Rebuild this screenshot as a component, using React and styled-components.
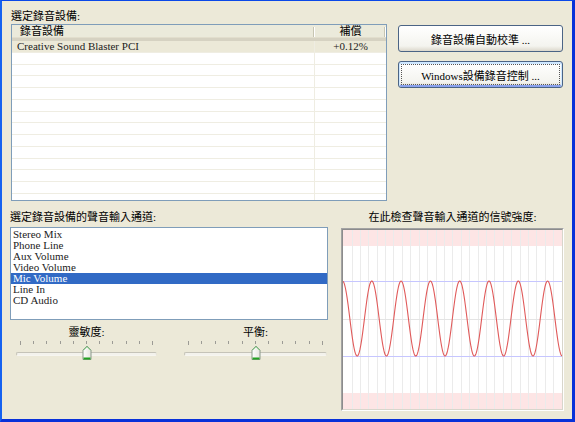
import React from 'react'
import styled, { createGlobalStyle } from 'styled-components'

const GlobalStyle = createGlobalStyle`
  html, body { margin: 0; padding: 0; }
  body { background: #ece9d8; }
`

const Window = styled.div`
  width: 575px;
  height: 422px;
  box-sizing: border-box;
  background: #ece9d8;
  border-top: 1px solid #0a48e8;
  border-left: 2px solid #1662f0;
  border-right: 3px solid #0831d9;
  border-bottom: 3px solid #0831d9;
  font-family: "Liberation Serif", "Noto Sans CJK TC", serif;
  font-size: 11px;
  color: #000;
  overflow: hidden;
`

const Top = styled.div`
  display: flex;
  padding: 8px 0 0 9px;
`

const DeviceCol = styled.div`
  width: 376px;
  display: flex;
  flex-direction: column;
`

const Label = styled.div`
  height: 14px;
  line-height: 14px;
  white-space: nowrap;
  text-align: ${p => (p.$center ? 'center' : 'left')};
`

const Table = styled.div`
  margin-top: 1px;
  height: 177px;
  box-sizing: border-box;
  border: 1px solid #7f9db9;
  background: #fff;
  overflow: hidden;
`

const HeaderRow = styled.div`
  display: grid;
  grid-template-columns: 303px 1fr;
  height: 16px;
  box-sizing: border-box;
  background: #ebeadb;
  border-bottom: 3px solid #d6d2c2;
  box-shadow: inset 0 -1px 0 #e2decd;
`

const HeaderCell = styled.div`
  position: relative;
  line-height: 13px;
  padding-left: ${p => (p.$center ? '0' : '8px')};
  text-align: ${p => (p.$center ? 'center' : 'left')};
  &::after {
    content: '';
    position: absolute;
    right: 1px;
    top: 2px;
    bottom: 1px;
    width: 1px;
    background: #c7c5b2;
    box-shadow: 1px 0 0 #fff;
  }
`

const Row = styled.div`
  display: grid;
  grid-template-columns: 303px 1fr;
  height: 11.75px;
  box-sizing: border-box;
  border-bottom: 1px solid #efede2;
  background: ${p => (p.$selected ? '#ece9d8' : '#fff')};
`

const Cell = styled.div`
  line-height: 11px;
  white-space: nowrap;
  padding-left: ${p => (p.$center ? '0' : '5px')};
  text-align: ${p => (p.$center ? 'center' : 'left')};
  border-right: ${p => (p.$divider ? '1px solid #efede2' : 'none')};
  color: #222;
`

const ButtonCol = styled.div`
  margin-left: 11px;
  width: 165px;
  padding-top: 16px;
  display: flex;
  flex-direction: column;
  gap: 9px;
`

const Button = styled.button`
  position: relative;
  height: 27px;
  padding: 0;
  border: 1px solid #4b6485;
  border-radius: 3px;
  background: linear-gradient(#ffffff, #f4f4ef 80%, #dcd8cc);
  font: inherit;
  color: #000;
  box-shadow: ${p =>
    p.$default ? 'inset 0 1px 0 1px #cee7ff, inset 0 -1px 0 1px #8aa2ee' : 'none'};
  &::after {
    content: '';
    display: ${p => (p.$default ? 'block' : 'none')};
    position: absolute;
    inset: 2px;
    border: 1px dotted #555;
  }
`

const Bottom = styled.div`
  display: flex;
  padding-left: 8px;
  margin-top: 9px;
`

const InputCol = styled.div`
  width: 318px;
  display: flex;
  flex-direction: column;
`

const ListBox = styled.div`
  margin-top: 3px;
  height: 93px;
  box-sizing: border-box;
  border: 1px solid #7f9db9;
  background: #fff;
  padding-top: 1px;
`

const ListItem = styled.div`
  height: 11px;
  line-height: 11px;
  padding-left: 2px;
  background: ${p => (p.$selected ? '#316ac5' : 'transparent')};
  color: ${p => (p.$selected ? '#fff' : '#222')};
`

const SliderRow = styled.div`
  display: grid;
  grid-template-columns: 141px 143px;
  column-gap: 27px;
  padding-left: 6px;
  margin-top: 6px;
`

const Slider = styled.div`
  display: flex;
  flex-direction: column;
`

const SliderLabel = styled.div`
  height: 12px;
  line-height: 12px;
  text-align: center;
  padding-left: ${p => p.$shift || 0}px;
`

const Ticks = styled.div`
  margin-top: 3px;
  height: 4px;
  display: flex;
  justify-content: space-between;
  padding: 0 4px;
`

const Tick = styled.span`
  width: 1px;
  height: ${p => (p.$end ? 4 : 3)}px;
  background: #9c9b95;
`

const Track = styled.div`
  position: relative;
  margin-top: 7px;
  height: 4px;
  box-sizing: border-box;
  border: 1px solid #c5c3b8;
  border-bottom-color: #f6f5f0;
  border-right-color: #e6e4da;
  border-radius: 2px;
  background: #f3f2ec;
`

const Thumb = styled.svg`
  position: absolute;
  left: 50%;
  top: -8px;
  transform: translateX(-50%);
`

const MeterCol = styled.div`
  margin-left: 13px;
  width: 223px;
  display: flex;
  flex-direction: column;
`

const Frame = styled.div`
  margin-top: 4px;
  height: 183px;
  box-sizing: border-box;
  border: 1px solid;
  border-color: #a3a3a3 #ffffff #ffffff #a3a3a3;
`

const FrameInner = styled.div`
  height: 100%;
  box-sizing: border-box;
  border: 1px solid;
  border-color: #8c8c8c #d8d6cc #d8d6cc #8c8c8c;
  background: #fff;
  svg { display: block; }
`

const channels = ['Stereo Mix', 'Phone Line', 'Aux Volume', 'Video Volume', 'Mic Volume', 'Line In', 'CD Audio']

const W = 219
const H = 179

function wavePath() {
  const pts = []
  for (let x = 0; x <= W; x += 0.5) {
    const y = 88.5 - 37.5 * Math.cos((2 * Math.PI * (x + 0.5)) / 29.3)
    pts.push(`${x.toFixed(1)},${y.toFixed(2)}`)
  }
  return 'M' + pts.join(' L')
}

const Meter = () => {
  const grid = []
  for (let x = 8.5; x < W; x += 8.4) grid.push(Math.round(x) + 0.5)
  return (
    <svg width={W} height={H} viewBox={`0 0 ${W} ${H}`}>
      <rect x="0" y="0" width={W} height="16" fill="#fde5e5" />
      <rect x="0" y="163" width={W} height="16" fill="#fde5e5" />
      {grid.map(x => (
        <line key={x} x1={x} y1="0" x2={x} y2={H} stroke="#ebebeb" strokeWidth="1" />
      ))}
      <line x1="0" y1="89.5" x2={W} y2="89.5" stroke="#e4e4e4" />
      <line x1="0" y1="51.5" x2={W} y2="51.5" stroke="#c6c6ff" />
      <line x1="0" y1="126.5" x2={W} y2="126.5" stroke="#c6c6ff" />
      <path d={wavePath()} fill="none" stroke="#e05a5a" strokeWidth="1.1" />
    </svg>
  )
}

const ThumbIcon = () => (
  <Thumb width="11" height="16" viewBox="0 0 11 16">
    <defs>
      <linearGradient id="tg" x1="0" y1="0" x2="1" y2="0">
        <stop offset="0" stopColor="#ffffff" />
        <stop offset="1" stopColor="#e6e5df" />
      </linearGradient>
    </defs>
    <polygon points="1.5,5 5.5,1 9.5,5 9.5,14.5 1.5,14.5" fill="url(#tg)" stroke="#8a9a8a" />
    <rect x="2" y="12.5" width="7" height="2" fill="#21a121" />
    <line x1="2" y1="5.2" x2="5.5" y2="1.7" stroke="#7ccf7c" />
    <line x1="5.5" y1="1.7" x2="9" y2="5.2" stroke="#7ccf7c" />
  </Thumb>
)

const SliderControl = ({ label, shift }) => (
  <Slider>
    <SliderLabel $shift={shift}>{label}</SliderLabel>
    <Ticks>
      {Array.from({ length: 11 }).map((_, i) => (
        <Tick key={i} $end={i === 0 || i === 10} />
      ))}
    </Ticks>
    <Track>
      <ThumbIcon />
    </Track>
  </Slider>
)

const App = () => {
  return (
    <Window>
      <GlobalStyle />
      <Top>
        <DeviceCol>
          <Label>選定錄音設備:</Label>
          <Table>
            <HeaderRow>
              <HeaderCell>錄音設備</HeaderCell>
              <HeaderCell $center>補償</HeaderCell>
            </HeaderRow>
            <Row $selected>
              <Cell $divider>Creative Sound Blaster PCI</Cell>
              <Cell $center>+0.12%</Cell>
            </Row>
            {Array.from({ length: 13 }).map((_, i) => (
              <Row key={i}>
                <Cell $divider />
                <Cell />
              </Row>
            ))}
          </Table>
        </DeviceCol>
        <ButtonCol>
          <Button>錄音設備自動校準 ...</Button>
          <Button $default>Windows設備錄音控制 ...</Button>
        </ButtonCol>
      </Top>
      <Bottom>
        <InputCol>
          <Label>選定錄音設備的聲音輸入通道:</Label>
          <ListBox>
            {channels.map(c => (
              <ListItem key={c} $selected={c === 'Mic Volume'}>{c}</ListItem>
            ))}
          </ListBox>
          <SliderRow>
            <SliderControl label="靈敏度:" />
            <SliderControl label="平衡:" />
          </SliderRow>
        </InputCol>
        <MeterCol>
          <Label $center>在此檢查聲音輸入通道的信號強度:</Label>
          <Frame>
            <FrameInner>
              <Meter />
            </FrameInner>
          </Frame>
        </MeterCol>
      </Bottom>
    </Window>
  )
}

export default App
